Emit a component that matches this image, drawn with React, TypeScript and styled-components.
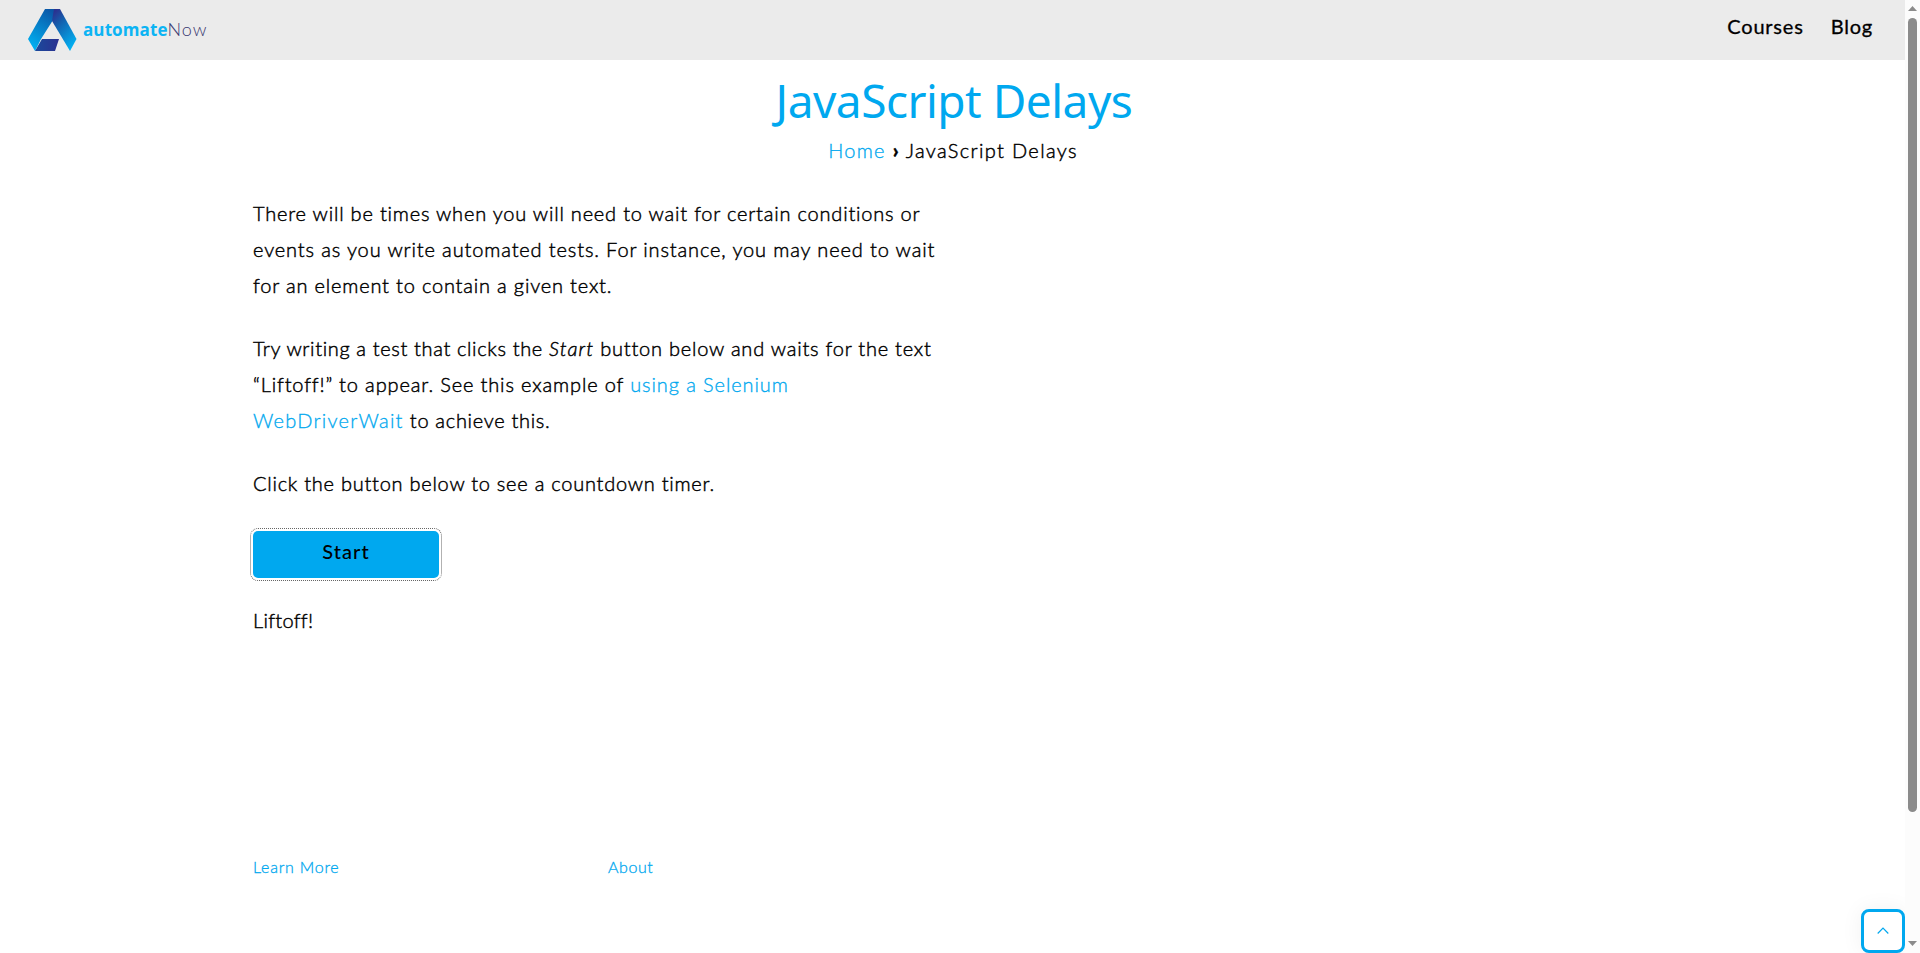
import React from 'react';
import styled, { createGlobalStyle } from 'styled-components';

const BLUE = '#00a8ef';

const GlobalStyle = createGlobalStyle`
  * { box-sizing: border-box; }
  html, body { margin: 0; background: #fff; overflow: hidden; }
  body { font-family: Lato, "Liberation Sans", sans-serif; font-size: 20px; line-height: 36px; color: #000; }
`;

const Shell = styled.div`
  display: flex;
  width: 100%;
  height: 953px;
  overflow: hidden;
`;

const Page = styled.div`
  position: relative;
  flex: 1;
  display: flex;
  flex-direction: column;
`;

const Header = styled.header`
  height: 60px;
  display: flex;
  justify-content: space-between;
  background: #ebebeb;
  padding: 0 32px 0 28px;
`;

const Brand = styled.a`
  display: flex;
  padding-top: 9px;
  color: ${BLUE};
`;

const BrandName = styled.span`
  margin: 10px 0 0 6px;
  font: 700 17px/20px "Open Sans", sans-serif;
  letter-spacing: 0.1px;
  white-space: nowrap;
  color: #0cb4f4;
`;

const BrandLight = styled.span`
  font-family: Lato, sans-serif;
  font-weight: 300;
  font-size: 18px;
  letter-spacing: 1px;
  color: #3b3a72;
`;

const Nav = styled.nav`
  display: flex;
  gap: 27px;
  padding-top: 8px;
`;

const NavLink = styled.a`
  font-weight: 400;
  letter-spacing: 0.8px;
  -webkit-text-stroke: 0.3px currentColor;
`;

const Title = styled.h1`
  margin: 12px 0 0;
  padding-left: 3px;
  text-align: center;
  font: 400 46px/56px "Noto Sans", sans-serif;
  letter-spacing: -0.5px;
  color: ${BLUE};
`;

const Breadcrumb = styled.nav`
  display: flex;
  justify-content: center;
  gap: 7px;
  margin-top: 4px;
  padding-left: 1px;
`;

const Text = styled.span<{ $track?: number; $link?: boolean; $strong?: boolean }>`
  letter-spacing: ${p => p.$track ?? 0.8}px;
  font-weight: ${p => (p.$strong ? 900 : 300)};
  -webkit-text-stroke: ${p => (p.$link ? 0.3 : 0.45)}px currentColor;
  color: ${p => (p.$link ? BLUE : 'inherit')};
`;

const Content = styled.main`
  margin: 27px 0 0 253px;
  display: flex;
  flex-direction: column;
  gap: 27px;
  height: 658px;
`;

const Paragraph = styled.p`
  margin: 0;
  white-space: nowrap;
`;

const Line = styled.span`
  display: block;
  height: 36px;
`;

const StartButton = styled.button`
  width: 186px;
  height: 47px;
  margin: 3px 0 -3px;
  padding: 0 0 7px;
  border: 0;
  border-radius: 5px;
  outline: 1px dotted #666;
  outline-offset: 2px;
  background: ${BLUE};
  color: #000;
  font: 500 20px/36px Lato, sans-serif;
  letter-spacing: 1.1px;
`;

const Footer = styled.footer`
  display: grid;
  grid-template-columns: 355px 355px;
  margin-left: 253px;
  font-size: 16px;
  line-height: 28px;
`;

const ToTop = styled.button`
  position: absolute;
  right: 0;
  bottom: 0;
  width: 44px;
  height: 44px;
  display: grid;
  place-items: center;
  padding: 0;
  border: 3px solid ${BLUE};
  border-radius: 8px;
  background: #fff;
  box-shadow: 0 0 22px rgba(0, 0, 0, 0.06);
`;

const Scrollbar = styled.div`
  position: relative;
  width: 15px;
  display: flex;
  flex-direction: column;
  align-items: center;
  background: #fcfcfc;
`;

const Thumb = styled.div`
  width: 9px;
  height: 794px;
  margin: 7px 0 auto;
  border-radius: 5px;
  background: #8b8b8b;
`;

const Arrow = styled.svg<{ $down?: boolean }>`
  display: block;
  width: 9px;
  height: 5px;
  margin: ${p => (p.$down ? '0 0 7px' : '6px 0 0')};
  transform: ${p => (p.$down ? 'rotate(180deg)' : 'none')};
`;

const Logo = () => (
  <svg width="49" height="42" viewBox="0 0 49 42">
    <defs>
      <linearGradient id="left" x1="0.7" y1="0" x2="0.2" y2="1">
        <stop offset="0" stopColor="#0a55a5" />
        <stop offset="1" stopColor="#00b4f5" />
      </linearGradient>
      <linearGradient id="right" x1="0.2" y1="0" x2="0.8" y2="1">
        <stop offset="0" stopColor="#2b3190" />
        <stop offset="0.3" stopColor="#1460ae" />
        <stop offset="1" stopColor="#00b8f8" />
      </linearGradient>
      <linearGradient id="base" x1="0" y1="0" x2="1" y2="0">
        <stop offset="0" stopColor="#1a4a9c" />
        <stop offset="1" stopColor="#2b3190" />
      </linearGradient>
    </defs>
    <path d="M17 0H32L13 30L7 42L0 30Z" fill="url(#left)" />
    <path d="M26 0H32L48.500 30L42 42L24 12Z" fill="url(#right)" />
    <path d="M14 30H31L27 42H7Z" fill="url(#base)" />
  </svg>
);

export default function App() {
  return (
    <>
      <GlobalStyle />
      <Shell>
        <Page>
          <Header>
            <Brand>
              <Logo />
              <BrandName>automate<BrandLight>Now</BrandLight></BrandName>
            </Brand>
            <Nav>
              <NavLink>Courses</NavLink>
              <NavLink>Blog</NavLink>
            </Nav>
          </Header>
          <Title>JavaScript Delays</Title>
          <Breadcrumb>
            <Text $link $track={1.3}>Home</Text>
            <Text $strong $track={0}>›</Text>
            <Text $track={1.35}>JavaScript Delays</Text>
          </Breadcrumb>
          <Content>
            <Paragraph>
              <Line><Text>There will be times when you will need to wait for certain conditions or</Text></Line>
              <Line><Text $track={0.87}>events as you write automated tests. For instance, you may need to wait</Text></Line>
              <Line><Text $track={0.82}>for an element to contain a given text.</Text></Line>
            </Paragraph>
            <Paragraph>
              <Line>
                <Text $track={0.65}>Try writing a test that clicks the </Text>
                <Text as="em" $track={1.1}>Start</Text>
                <Text $track={0.78}> button below and waits for the text</Text>
              </Line>
              <Line>
                <Text $track={0.86}>“Liftoff!” to appear. See this example of </Text>
                <Text $link $track={0.9}>using a Selenium</Text>
              </Line>
              <Line>
                <Text $link $track={1.25}>WebDriverWait</Text>
                <Text $track={0.7}> to achieve this.</Text>
              </Line>
            </Paragraph>
            <Paragraph><Text $track={0.75}>Click the button below to see a countdown timer.</Text></Paragraph>
            <StartButton>Start</StartButton>
            <Paragraph><Text $track={0.3}>Liftoff!</Text></Paragraph>
          </Content>
          <Footer>
            <Text $link $track={0.75}>Learn More</Text>
            <Text $link $track={0.6}>About</Text>
          </Footer>
          <ToTop aria-label="Back to top">
            <svg width="12" height="8" viewBox="0 0 12 8" fill="none" stroke={BLUE} strokeWidth="1.2">
              <path d="M0.700 6.500L6 1.200L11.300 6.500" />
            </svg>
          </ToTop>
        </Page>
        <Scrollbar>
          <Arrow viewBox="0 0 9 5"><path d="M4.500 0L9 5H0Z" fill="#8b8b8b" /></Arrow>
          <Thumb />
          <Arrow $down viewBox="0 0 9 5"><path d="M4.500 0L9 5H0Z" fill="#8b8b8b" /></Arrow>
        </Scrollbar>
      </Shell>
    </>
  );
}
